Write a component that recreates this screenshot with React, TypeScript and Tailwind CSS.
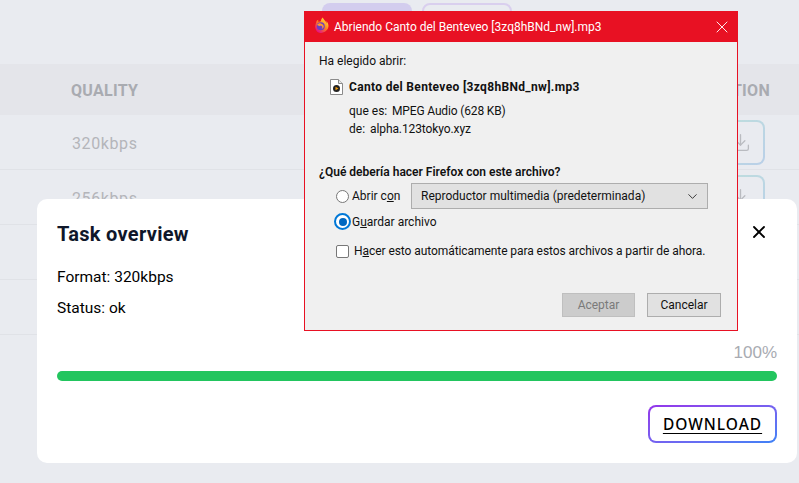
import { Download, X, ChevronDown } from 'lucide-react';

// only the first two rows peek out from behind the card
const rows = ['320kbps', '256kbps', '', ''];

function FirefoxLogo() {
  return (
    <svg width="17" height="17" viewBox="0 0 32 32" className="mt-[-4px] shrink-0">
      <defs>
        <linearGradient id="ffo" x1="0.8" y1="0.1" x2="0.2" y2="0.9">
          <stop offset="0" stopColor="#ffdb3a" />
          <stop offset="0.5" stopColor="#ff7a1f" />
          <stop offset="1" stopColor="#e31587" />
        </linearGradient>
      </defs>
      <path d="M30 12c-.7-1.700-2.100-3.500-3.200-4 .9 1.700 1.400 3.500 1.500 4.500-1.800-4.500-4.900-6.300-7.400-10.300-.1-.2-.3-.4-.4-.7-.1-.1-.1-.3-.2-.4-1 .6-3.500 3.400-3.600 6.700-1.500.1-3 .6-4 1.500-.2-.1-.3-.3-.5-.4-.6-1.300-.6-3.300-.5-3.800-1 .5-1.800 1.200-2.300 1.700-.8.800-1.500 3.100-1.800 4.400-.6 1.100-1 2.400-1.300 4.600C4.700 21 9 30 16.500 30 24 30 31 24 31 17c0-1.800-.4-3.500-1-5z" fill="url(#ffo)" />
      <circle cx="16.500" cy="17.500" r="7.500" fill="#6b3fc4" />
      <path d="M9.500 15c1.500-2.500 4.500-3.500 7-3 3 .6 5.500 3 5.500 6 0 2-1.500 4-4 4 2-1 2-4 0-5-1.500-.8-3-.4-4 .2-1.500-1-3-1.500-4.500-2.200z" fill="#ff9a2e" />
    </svg>
  );
}

function FileIcon() {
  return (
    <svg width="13" height="16" viewBox="0 0 13 16" className="shrink-0">
      <path d="M.5.500h8l4 4v11H.500z" fill="#fff" stroke="#8a8a8a" />
      <path d="M8.500.500v4h4" fill="#e6e6e6" stroke="#8a8a8a" />
      <circle cx="6.500" cy="9.500" r="3.500" fill="#222" />
      <path d="M5.500 7.800l3 1.700-3 1.700z" fill="#f59e0b" />
    </svg>
  );
}

function Background() {
  return (
    <div className="h-[483px] bg-[#e9ebf0]">
      <div className="flex h-[64px] gap-[10px] pl-[322px] pt-[3px]">
        <div className="h-[20px] w-[90px] rounded-[8px] bg-[#d3cdee]" />
        <div className="h-[20px] w-[90px] rounded-[8px] border-2 border-[#d9cfee]" />
      </div>
      <div className="flex h-[51px] items-center justify-between bg-[#e4e5ea] pl-[71px] pr-[29px] pt-[2px] font-['Roboto',sans-serif] text-[16px] font-bold tracking-[0.3px] text-[#a9abb1]">
        <span>QUALITY</span>
        <span>ACTION</span>
      </div>
      {rows.map((r, i) => (
        <div key={i} className="flex h-[55px] items-center justify-between border-b border-[#e0e2e7] pl-[72px] pr-[34px] pt-[3px] font-['Roboto',sans-serif] text-[16px] text-[#b4b5ba]">
          <span className="tracking-[0.6px]">{r}</span>
          {i < 2 && (
            <span className="mt-[-3px] rounded-[8px] bg-gradient-to-br from-[#bfe0dc] to-[#b9cfe8] p-[2px]">
              <span className="flex h-[41px] w-[46px] items-center justify-center rounded-[6px] bg-[#e9ebf0] text-[#b9bbc0]">
                <Download size={21} strokeWidth={1.500} />
              </span>
            </span>
          )}
        </div>
      ))}
    </div>
  );
}

function TaskCard() {
  return (
    <div className="absolute left-[37px] top-[199px] h-[264px] w-[760px] rounded-[10px] bg-white px-[20px] pt-[20px] font-['Roboto',sans-serif] text-[#111827]">
      <div className="flex items-center justify-between">
        <h2 className="text-[20px] leading-[30px] font-bold tracking-[0.3px] text-[#0f172a]">Task overview</h2>
        <X size={20} strokeWidth={2.200} className="mr-[8px] mt-[-4px] text-black" />
      </div>
      <p className="mt-[18px] text-[15.500px] leading-[20px] text-black">Format: 320kbps</p>
      <p className="mt-[11px] text-[15.500px] leading-[20px] text-black">Status: ok</p>
      <div className="mt-[24px] text-right font-['Liberation_Sans',sans-serif] text-[17px] leading-[22px] text-[#a8abb2]">100%</div>
      <div className="mt-[7px] h-[10px] rounded-full bg-[#22c55e]" />
      <div className="mt-[24px] flex justify-end">
        <div className="rounded-[8px] bg-gradient-to-br from-[#9333ea] to-[#3b82f6] p-[2px]">
          <div className="flex h-[34px] w-[125px] items-center justify-center rounded-[6px] bg-white pt-[2px] font-['Noto_Sans',sans-serif] text-[15.500px] font-medium tracking-[1px] text-black underline underline-offset-[3px]">
            DOWNLOAD
          </div>
        </div>
      </div>
    </div>
  );
}

function FirefoxDialog() {
  return (
    <div className="absolute left-[304px] top-[11px] flex h-[320px] w-[434px] flex-col border border-[#e81123] bg-[#f0f0f0] font-['Roboto',sans-serif] text-[12px] leading-[16px] text-[#111]">
      <div className="flex h-[30px] shrink-0 items-center bg-[#e81123] pl-[7px] pr-[5px] text-white">
        <FirefoxLogo />
        <span className="ml-[5px] flex-1">Abriendo Canto del Benteveo [3zq8hBNd_nw].mp3</span>
        <X size={20} strokeWidth={1.100} />
      </div>
      <div className="flex flex-1 flex-col pl-[14px] pr-[16px]">
        <p className="mt-[11px]">Ha elegido abrir:</p>
        <div className="mt-[10px] flex items-center pl-[11px]">
          <FileIcon />
          <span className="ml-[6px] font-bold tracking-[0.33px]">Canto del Benteveo [3zq8hBNd_nw].mp3</span>
        </div>
        <div className="mt-[8px] flex pl-[30px]">
          <span className="w-[43px]">que es:</span>
          <span className="tracking-[-0.15px]">MPEG Audio (628 KB)</span>
        </div>
        <div className="mt-[2px] flex pl-[30px]">
          <span className="w-[21px]">de:</span>
          <span className="tracking-[-0.1px]">alpha.123tokyo.xyz</span>
        </div>
        <p className="mt-[27px] font-semibold">¿Qué debería hacer Firefox con este archivo?</p>
        <div className="mt-[3px] flex items-center pl-[17px]">
          <span className="h-[13px] w-[13px] rounded-full border border-[#777] bg-white" />
          <span className="ml-[3px] w-[59px]">Abrir c<u>o</u>n</span>
          <div className="flex h-[26px] w-[297px] items-center justify-between border border-[#adadad] bg-[#e1e1e1] pl-[9px] pr-[7px]">
            <span>Reproductor multimedia (predeterminada)</span>
            <ChevronDown size={15} strokeWidth={1.300} />
          </div>
        </div>
        <div className="mt-[4px] flex items-center pl-[15px]">
          <span className="flex h-[17px] w-[17px] items-center justify-center rounded-full border-[2px] border-[#0078d7] bg-white">
            <span className="h-[8px] w-[8px] rounded-full bg-[#0067c0]" />
          </span>
          <span className="ml-[1px]">G<u>u</u>ardar archivo</span>
        </div>
        <div className="mt-[13px] flex items-center pl-[17px]">
          <span className="h-[13px] w-[13px] rounded-[2px] border border-[#777] bg-white" />
          <span className="ml-[5px] tracking-[-0.07px]">H<u>a</u>cer esto automáticamente para estos archivos a partir de ahora.</span>
        </div>
        <div className="mt-[34px] flex justify-end gap-[12px]">
          <div className="flex h-[24px] w-[73px] items-center justify-center border border-[#bfbfbf] bg-[#cccccc] text-[#7a7a7a]">Aceptar</div>
          <div className="flex h-[24px] w-[74px] items-center justify-center border border-[#adadad] bg-[#e1e1e1]">Cancelar</div>
        </div>
      </div>
    </div>
  );
}

export default function App() {
  return (
    <div className="relative h-[483px] w-[799px] overflow-hidden">
      <Background />
      <TaskCard />
      <FirefoxDialog />
    </div>
  );
}
